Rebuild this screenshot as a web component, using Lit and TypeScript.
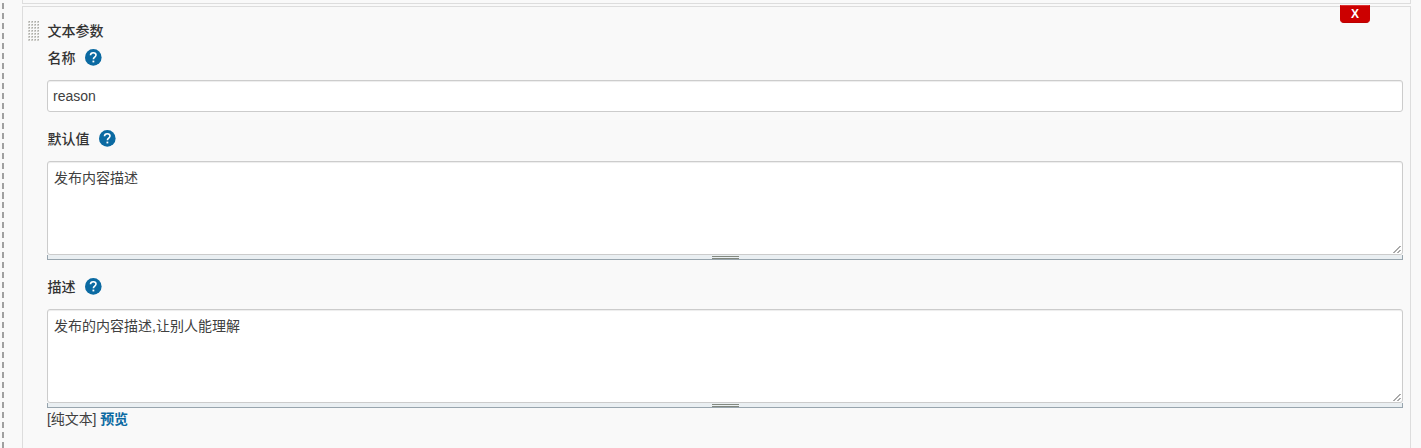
import { LitElement, html, css, svg } from "lit";
import { customElement, property } from "lit/decorators.js";

const fonts = css`"Liberation Sans", "Noto Sans CJK SC", sans-serif`;

@customElement("help-icon")
class HelpIcon extends LitElement {
  static styles = css`
    :host { display: block; width: 17px; height: 17px; }
    svg { display: block; }
  `;
  render() {
    return html`<svg width="17" height="17" viewBox="0 0 17 17">
      <circle cx="8.3" cy="8.4" r="8.3" fill="#0b6aa2" />
      <path d="M5.5 6.3C5.5 4.7 6.7 3.7 8.3 3.7s2.7.9 2.7 2.4c0 2-2.6 2.1-2.6 4.2" fill="none" stroke="#fff" stroke-width="1.6" />
      <rect x="7.5" y="11.6" width="1.8" height="1.8" fill="#fff" />
    </svg>`;
  }
}

@customElement("resizable-area")
class ResizableArea extends LitElement {
  @property() value = "";
  static styles = css`
    :host { display: block; }
    .area {
      display: flex; justify-content: space-between; height: 94px;
      box-sizing: border-box; border: 1px solid #ccc; border-radius: 3px;
      background: #fff; padding: 6px; color: #404040;
      box-shadow: inset 0 1px 1px rgba(0,0,0,.075);
      font: 14px/20px ${fonts};
    }
    .corner { align-self: flex-end; margin: 0 -6px -6px 0; }
    .handle {
      height: 5px; box-sizing: border-box; background: #eaeff2;
      border: solid #98a5ae; border-width: 0 1px 1px;
      display: flex; justify-content: center;
    }
    .grip { width: 27px; height: 3px; margin-top: 1px; box-sizing: border-box; border: solid #82887f; border-width: 1px 0; }
  `;
  render() {
    return html`<div class="area"><span>${this.value}</span>
      <svg class="corner" width="9" height="9" viewBox="0 0 9 9">
        <path d="M.5 8L7.5 1M4.5 8L7.5 5" stroke="#555" stroke-width="1" fill="none" />
      </svg></div>
      <div class="handle"><div class="grip"></div></div>`;
  }
}

@customElement("app-root")
class AppRoot extends LitElement {
  static styles = css`
    :host { display: block; height: 448px; overflow: hidden; background: #f9f9f9; color: #333; font: 14px/20px ${fonts}; }
    .page { display: flex; height: 448px; }
    .rail { width: 2px; margin: 0 18px 0 2px; background: repeating-linear-gradient(#a0a0a0 0 6px, transparent 6px 9.975px) 0 -7px / 2px 460px; }
    .list { width: 1389px; display: flex; flex-direction: column; gap: 2px; }
    .previous { height: 4px; box-sizing: border-box; border: solid #ddd; border-width: 0 1px 1px; }
    .card { position: relative; flex: 1; border: solid #ddd; border-width: 1px 1px 0; padding: 14px 7px 0 5px; display: flex; }
    .drag { width: 12px; height: 21px; margin-right: 7px; flex: none; }
    .body { flex: 1; }
    .delete {
      position: absolute; right: 40px; top: -2px; width: 30px; height: 18px;
      box-sizing: border-box; border: 1px solid #c00; border-color: #d33 #c00 #b00;
      border-radius: 0 0 4px 4px; background: #c00; color: #fff;
      font: bold 12px/16px ${fonts}; text-align: center; padding: 0;
    }
    .label { display: flex; gap: 10px; height: 20px; font-weight: 500; padding-left: .4px; }
    help-icon { margin: .6px 0 0 -.4px; }
    .title { height: 27px; }
    .input {
      height: 32px; box-sizing: border-box; border: 1px solid #ccc; border-radius: 3px;
      background: #fff; padding: 5px; margin: 12px 0 17px; color: #404040;
      box-shadow: inset 0 1px 1px rgba(0,0,0,.075);
    }
    resizable-area { margin: 12px 0 17px; }
    .last { margin-bottom: 1px; }
    .mode { color: #404040; letter-spacing: -.08px; }
    a { color: #0b6aa2; font-weight: bold; }
  `;
  render() {
    return html`<div class="page">
      <div class="rail"></div>
      <div class="list">
        <div class="previous"></div>
        <div class="card">
          <button class="delete">X</button>
          <svg class="drag" width="12" height="21">
            ${Array.from({ length: 28 }, (_, i) => {
              const x = (i % 4) * 3;
              const y = Math.floor(i / 4) * 3;
              return svg`<rect x=${x} y=${y} width="2" height="2" fill="#d0d0cc" /><rect x=${x + 1} y=${y} width="1" height="1" fill="#aaaaa6" />`;
            })}
          </svg>
          <div class="body">
            <div class="label title">文本参数</div>
            <div class="label">名称<help-icon></help-icon></div>
            <div class="input">reason</div>
            <div class="label">默认值<help-icon></help-icon></div>
            <resizable-area value="发布内容描述"></resizable-area>
            <div class="label">描述<help-icon></help-icon></div>
            <resizable-area class="last" value="发布的内容描述,让别人能理解"></resizable-area>
            <div class="mode">[纯文本] <a>预览</a></div>
          </div>
        </div>
      </div>
    </div>`;
  }
}
